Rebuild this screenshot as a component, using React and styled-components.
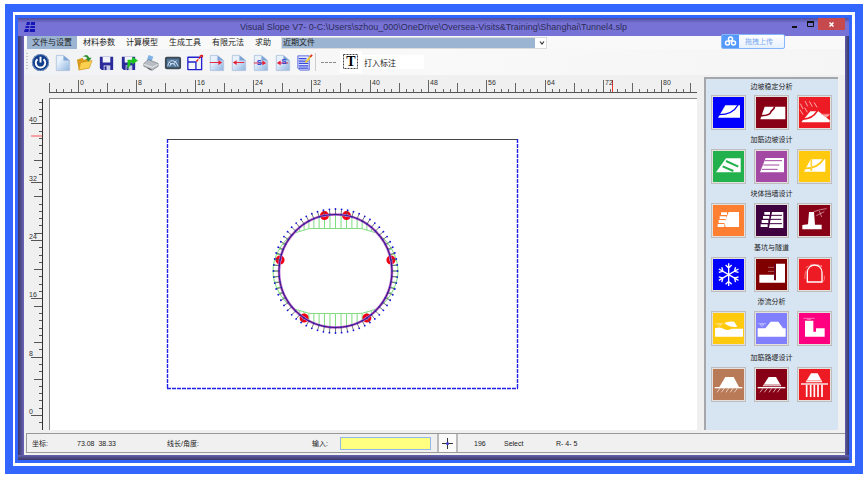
import styled, { createGlobalStyle } from 'styled-components'

const GlobalStyle = createGlobalStyle`
  * { box-sizing: border-box; }
  body {
    margin: 0;
    background: #fff;
    color: #222;
    font-family: "Liberation Sans", "Noto Sans CJK SC", sans-serif;
    font-size: 8px;
  }
  button, input, select { font: inherit; color: inherit; }
  svg { display: block; }`

const Page = styled.div`
  min-height: 100vh;
  display: flex;
  padding: 4px 4px 3px 5px;`

const OuterFrame = styled.div`
  flex: 1;
  display: flex;
  min-width: 0;
  border: 8px solid #36f;
  padding: 3px 3px 3px 2px;`

const InnerFrame = styled.div`
  flex: 1;
  display: flex;
  min-width: 0;
  border: 3px solid #36f;`

const Window = styled.div`
  flex: 1;
  min-width: 0;
  display: flex;
  flex-direction: column;
  background: linear-gradient(to right, #393766, #6b63b8 6px, #6b63b8 calc(100% - 5px), #393766);`

const TitleBar = styled.header`
  height: 18px;
  display: grid;
  grid-template-columns: 62px 1fr 62px;
  align-items: center;
  background: linear-gradient(#4f4c9c, #7773d6 5px);`

const AppIcon = styled.div`
  padding-left: 6px;`

const Title = styled.h1`
  margin: 0;
  text-align: center;
  font-weight: 400;
  font-size: 9px;
  line-height: 16px;
  color: #2d2b58;
  white-space: nowrap;`

const WindowButtons = styled.div`
  align-self: start;
  display: flex;
  justify-content: flex-end;
  padding-right: 4px;`

const WindowButton = styled.button`
  width: ${p => p.$close ? 27 : 16}px;
  height: 12px;
  padding: 0;
  border: 0;
  display: grid;
  place-items: center;
  background: ${p => p.$close ? '#c64a4d' : 'transparent'};`

const Client = styled.div`
  flex: 1;
  display: flex;
  flex-direction: column;
  margin: 0 4px 0 6px;
  background: #f0f0f0;
  padding-bottom: 2px;`

const FrameBottom = styled.div`
  height: 5px;
  background: linear-gradient(#6762ae, #393766);`

const MenuBar = styled.nav`
  height: 13px;
  display: flex;
  align-items: center;
  gap: 1px;
  padding-left: 3px;
  background: #f9f9f9;`

const MenuItem = styled.button`
  height: 13px;
  border: 0;
  padding: 0 5px;
  line-height: 12px;
  white-space: nowrap;
  background: ${p => p.$active ? '#9bb4d1' : 'transparent'};`

const Recent = styled.div`
  position: relative;
  width: 266px;
  margin-left: 4px;
  svg { position: absolute; right: 2px; top: 3px; pointer-events: none; }`

const RecentSelect = styled.select`
  display: block;
  appearance: none;
  width: 100%;
  height: 12px;
  padding: 0 1px;
  line-height: 10px;
  border: 1px solid #dcdcdc;
  border-radius: 0;
  background: linear-gradient(to left, #fff 11px, #9bb4d1 11px);`

const Toolbar = styled.div`
  height: 26px;
  display: flex;
  align-items: center;
  background: linear-gradient(to right, #f1f2f4, #f9f9f9 50%, #f5f5f5);`

const Grip = styled.div`
  width: 2px;
  height: 18px;
  margin: 0 1px 0 2px;
  background: repeating-linear-gradient(#c4c4c4 0 1px, transparent 1px 3px);`

const ToolButton = styled.button`
  width: 22px;
  height: 22px;
  padding: 0;
  border: 0;
  display: grid;
  place-items: center;
  background: ${p => p.$lit ? '#fff' : 'transparent'};`

const Divider = styled.div`
  width: 1px;
  height: 18px;
  margin-right: 2px;
  background: #ccc;`

const NoteInput = styled.input`
  width: 62px;
  height: 14px;
  border: 0;
  padding: 0 2px;
  background: #fff;`

const UploadButton = styled.button`
  position: absolute;
  top: 34px;
  right: 82px;
  height: 15px;
  width: 64px;
  padding: 0;
  display: flex;
  align-items: center;
  overflow: hidden;
  border: 1px solid #86b5f9;
  border-radius: 2px;
  background: linear-gradient(#fff, #e6f0fd);
  color: #79a9f2;
  font-size: 7px;
  line-height: 13px;
  svg { background: #559afb; }
  span { flex: 1; padding-left: 6px; text-align: left; }`

const Workspace = styled.main`
  flex: 1;
  display: grid;
  grid-template-columns: 25px 1fr 134px;
  grid-template-rows: 23px 1fr;
  padding-right: 7px;`

const TopRuler = styled.div`
  grid-column: 2;
  margin-right: 7px;
  svg { width: 100%; height: 23px; }`

const SideRuler = styled.div`
  grid-row: 2;
  display: flex;
  svg { width: 100%; height: auto; }`

const Canvas = styled.section`
  grid-column: 2;
  grid-row: 2;
  margin-right: 7px;
  display: flex;
  border-top: 1px solid #8a8a8a;
  border-left: 1px solid #8a8a8a;
  background: #fff;
  svg { width: 100%; min-height: 330px; height: auto; }`

const Panel = styled.aside`
  grid-column: 3;
  grid-row: 1 / 3;
  margin-top: 2px;
  padding-left: 5px;
  border-top: 2px solid #a5a7ab;
  border-left: 2px solid #a5a7ab;
  background: #d7e4f2;`

const Group = styled.section`
  width: 121px;
  & + & { padding-top: 2px; }
  & + & h2 { padding-bottom: 1px; }
  &:last-child { padding-top: 4px; }`

const GroupTitle = styled.h2`
  margin: 0;
  text-align: center;
  font-weight: 400;
  font-size: 7px;
  line-height: 16px;`

const GroupButtons = styled.div`
  display: flex;
  gap: 8px;`

const ModelButton = styled.button`
  width: 35px;
  height: 35px;
  padding: 1px;
  border: 1px solid #bdbdbd;
  color: ${p => p.$color};
  background: #e4e0de;
  svg { width: 31px; height: 31px; background: ${p => p.$color}; }`

const StatusBar = styled.footer`
  height: 20px;
  margin: 3px 0 0 2px;
  display: grid;
  grid-template-columns: 45px 90px 145px 28px 97px 37px 30px 52px 1fr;
  align-items: center;
  padding-left: 5px;
  border: 1px solid #999;
  border-right: 0;
  font-size: 7px;
  white-space: nowrap;`

const CommandInput = styled.input`
  width: 91px;
  height: 13px;
  padding: 0 2px;
  border: 1px solid #8fb8e6;
  border-radius: 0;
  background: #ffff80;`

const CrossButton = styled.button`
  width: 21px;
  height: 18px;
  padding: 0;
  border: 1px solid #bbb;
  border-width: 0 2px;
  display: grid;
  place-items: center;
  background: #fafafa;`

const UNIT = 7.29

function HorizontalRuler(){
  const ticks = []
  for (let n = -4; n <= 84; n++) ticks.push(n)
  return <TopRuler>
    <svg>
      {ticks.map(n => {
        const x = Math.round(29 + n * UNIT) + 0.5
        const size = n % 8 === 0 ? 12 : n % 4 === 0 ? 9 : 3
        return <line key={n} x1={x} x2={x} y1={17 - size} y2="17" stroke="#666" />
      })}
      <path d="M0 17.5H648" stroke="#555" />
      <path d="M563.5 5V17" stroke="#e33" />
      {ticks.filter(n => n >= 0 && n % 8 === 0).map(n =>
        <text key={n} x={Math.round(31 + n * UNIT)} y="10" fontSize="7" fill="#333">{n}</text>
      )}
    </svg>
  </TopRuler>
}

function VerticalRuler(){
  const ticks = []
  for (let n = -1; n <= 43; n++) ticks.push(n)
  return <SideRuler>
    <svg>
      {ticks.map(n => {
        const y = Math.round(317 - n * UNIT) + 0.5
        const start = n % 8 === 0 ? 7 : n % 5 === 0 ? 10 : 15
        return <line key={n} x1={start} x2="18" y1={y} y2={y} stroke="#555" />
      })}
      <path d="M18.5 1V332" stroke="#333" />
      <path d="M7 38H18" stroke="#f6a0a0" strokeWidth="2" />
      {ticks.filter(n => n >= 0 && n % 8 === 0).map(n =>
        <text key={n} x="5" y={Math.round(316 - n * UNIT)} fontSize="7" fill="#333">{n}</text>
      )}
    </svg>
  </SideRuler>
}

// the lining is split in 64 beam elements, moments are drawn in green
const RADIUS = 56.5
const NODES = Array.from({ length: 64 }, (_, i) => {
  const a = i * Math.PI / 32
  return { x: Math.sin(a), y: -Math.cos(a) }
})
const HINGES = [2, 62, 14, 50, 26, 38]

function momentPoint(n){
  const x = n.x * RADIUS
  const y = n.y * RADIUS
  const ax = Math.abs(x)
  if (Math.abs(n.y) > 0.67) {
    const flat = ax < 26 ? 42.5 : 42.5 - (ax - 26) * 0.3
    return { x, y: Math.sign(y) * Math.min(flat, Math.abs(y)) }
  }
  return { x: Math.sign(x) * (ax + 6 * (1 - Math.pow(Math.abs(n.y) / 0.7, 2))), y }
}

function Tunnel(){
  const points = list => list.map(p => `${p.x},${p.y}`).join(' ')
  const moments = NODES.map(momentPoint)
  return <g transform="translate(285.5 172)" fill="none">
    <g stroke="#7fdc7f">
      <polygon points={points(moments)} />
      {NODES.map((n, i) =>
        <line key={i} x1={n.x * RADIUS} y1={n.y * RADIUS} x2={moments[i].x} y2={moments[i].y} />
      )}
    </g>
    {HINGES.map(i =>
      <circle key={i} cx={NODES[i].x * RADIUS} cy={NODES[i].y * RADIUS} r="3" stroke="#f00012" strokeWidth="3" />
    )}
    <circle r={RADIUS} stroke="#b765cf" strokeWidth="2.6" />
    <circle r={RADIUS} stroke="#4a1a7c" strokeWidth="1.1" />
    {NODES.map((n, i) => <g key={i}>
      <line x1={n.x * RADIUS} y1={n.y * RADIUS} x2={n.x * 62} y2={n.y * 62} stroke="#555" strokeWidth="0.8" />
      <circle cx={n.x * 62} cy={n.y * 62} r="0.9" fill="#1414d8" />
      <circle cx={n.x * RADIUS} cy={n.y * RADIUS} r="0.7" fill="#1414d8" />
    </g>)}
  </g>
}

function Drawing(){
  return <Canvas>
    <svg>
      <path d="M117 40.5H468" stroke="#444" />
      <path d="M117.5 40V290M467.5 40V290M117 289.5H468" stroke="#2222e6" strokeWidth="1.4" strokeDasharray="4 1" />
      <Tunnel />
    </svg>
  </Canvas>
}

const Sheet = () => <>
  <linearGradient id="paper" x1="0" y1="0" x2="1" y2="1">
    <stop offset="0.3" stopColor="#e6f1fc" />
    <stop offset="1" stopColor="#8fb3e0" />
  </linearGradient>
  <path d="M3.5 2.5H11L17.5 8V18.5H3.5Z" fill="url(#paper)" stroke="#b4c6de" />
  <path d="M11 2.5V8H17.5Z" fill="#7fa3d4" />
</>

const Disk = () => <>
  <path d="M3 4H17V18H5L3 16Z" fill="#2a2a9a" />
  <path d="M6 4H14V10H6Z" fill="#f2f4fb" />
  <path d="M7 13H14V18H7Z" fill="#c9cde6" />
  <path d="M8 14H10V18H8Z" fill="#2a2a9a" />
</>

const TOOLS = [
  ['Power', <>
    <circle cx="10" cy="10" r="9" fill="#123f8c" />
    <circle cx="10" cy="10" r="8.5" fill="none" stroke="#7f9cc8" />
    <path d="M6.8 6.5A5 5 0 1 0 13.2 6.5M10 4V10" fill="none" stroke="#fff" strokeWidth="2" />
  </>],
  ['New', <Sheet />],
  ['Open', <>
    <path d="M2 7L8 5L9 7L14 6V16L4 18Z" fill="#d99b1e" />
    <path d="M6 10L18 8L15 16L4 18Z" fill="#fbd04e" stroke="#c88a1a" strokeWidth=".6" />
    <path d="M8 4Q13 0 15 5H17.5L14.5 9L11 6H13Q12 3 8 4Z" fill="#2d8f2d" />
  </>],
  ['Save', <Disk />],
  ['Save as', <>
    <Disk />
    <path d="M9 17V7H14V4L20 8L14 12V10H12V13Z" fill="#1ec41e" />
  </>],
  ['Print', <>
    <path d="M8 2L13 4L11 9L6 8Z" fill="#7fb2e6" />
    <path d="M3 11L8 7L18 11V14L12 18L3 14Z" fill="#b8bcc4" stroke="#70757f" strokeWidth=".7" />
    <path d="M3 12L12 15L18 12" fill="none" stroke="#eee" />
    <path d="M7 16L11 18" stroke="#444" />
  </>],
  ['Camera', <>
    <rect x="2" y="4" width="17" height="13" rx="2" fill="#3d4a55" />
    <rect x="4" y="6" width="13" height="9" fill="#52779c" />
    <path d="M5 14Q6 8 10 8T16 14M7 14Q8 10 10.5 11T13 14M6 9L9 12M14 8L11 12" fill="none" stroke="#d3e3f2" />
  </>],
  ['Resize', <>
    <path d="M3 4.5H17.5V18M3 18V4M3 17.5H18M3 9.5H11.5V18" fill="none" stroke="#2020d0" strokeWidth="1.4" />
    <path d="M12 9L18 2" stroke="#e01818" strokeWidth="1.4" strokeDasharray="3 1" />
    <path d="M15 2H19V5Z" fill="#e01818" />
  </>],
  ['Export', <><Sheet /><path d="M3 10H14" stroke="#e8203a" /><path d="M12 7.5L16 10L12 12.5Z" fill="#e8203a" /></>],
  ['Import', <><Sheet /><path d="M6 10H16" stroke="#e8203a" /><path d="M8 7.5L4 10L8 12.5Z" fill="#e8203a" /></>],
  ['Export section', <>
    <Sheet />
    <path d="M3 10.5H14" stroke="#e8203a" /><path d="M12 8L16 10.5L12 13Z" fill="#e8203a" />
    <text x="6" y="13" fontSize="8" fontWeight="700" fill="#2b3fd0">S</text>
  </>],
  ['Import section', <>
    <Sheet />
    <path d="M6 10.5H16" stroke="#e8203a" /><path d="M8 8L4 10.5L8 13Z" fill="#e8203a" />
    <text x="9" y="12" fontSize="8" fontWeight="700" fill="#2b3fd0">S</text>
  </>],
  ['Report', <>
    <path d="M3 3H15V18H5L3 16Z" fill="#dfe6ff" stroke="#3a49d8" strokeWidth=".8" />
    <path d="M4 6H12M4 8.5H14M4 11H14M4 13.5H14M4 16H14" stroke="#3a49d8" strokeWidth="1.3" />
    <path d="M11 10L17 3" stroke="#f2cf2c" strokeWidth="2" />
    <path d="M16 4L18 2" stroke="#e0382c" strokeWidth="2" />
  </>]
]

const Hatches = () => <path d="M27 64l-9 12M40 64l-9 12M53 64l-8 12M66 64l-8 12M79 64l-9 12" stroke="#fff" strokeWidth="2" />

// shapes that cut into the white soil body use currentColor, the button's own colour
const GROUPS = [
  { title: '边坡稳定分析', models: [
    ['#0000ff', <>
      <path d="M21 68L43 31H87V68Z" fill="#fff" />
      <path d="M20 59C50 60 70 50 81 30" stroke="currentColor" strokeWidth="4" />
    </>],
    ['#880015', <>
      <path d="M19 73L32 35H94V73Z" fill="#fff" />
      <path d="M18 62C38 62 48 60 50 52S60 46 62 34" stroke="currentColor" strokeWidth="5" />
    </>],
    ['#ed1c24', <>
      <path d="M14 80L40 49H64L98 76V82H14Z" fill="#fff" />
      <path d="M12 72C36 74 50 66 62 46" stroke="currentColor" strokeWidth="5" />
      <path d="M10 26l8 16M9 44l9 15M24 18l8 16M23 38l8 14M37 19l9 16M51 22l9 15" stroke="#f8a9a9" strokeWidth="3" />
      <path d="M72 58H99M80 60H96L88 67Z" fill="#f8a9a9" stroke="#f8a9a9" strokeWidth="2" />
    </>]
  ] },
  { title: '加筋边坡设计', models: [
    ['#22b14c', <>
      <path d="M15 70L45 28H89V70Z" fill="#fff" />
      <path d="M45 36L82 53M35 52L67 66" stroke="currentColor" strokeWidth="6" />
    </>],
    ['#a349a4', <>
      <path d="M18 70L35 27H90V70Z" fill="#fff" />
      <path d="M32 35H84M28 48H76M24 61H71" stroke="currentColor" strokeWidth="3" />
    </>],
    ['#ffc90e', <>
      <path d="M21 68L41 31H85V68Z" fill="#fff" />
      <path d="M20 58C46 60 68 48 80 30M43 31V65" stroke="currentColor" strokeWidth="5" />
      <path d="M43 34V60" stroke="#fff" strokeWidth="1" />
    </>]
  ] },
  { title: '块体挡墙设计', models: [
    ['#ff7f32', <>
      <path d="M53 27H84V72H44L40 60Z" fill="#fff" />
      <path d="M30 28H48V36H30ZM26 40H46V48H26ZM23 51H43V60H23ZM20 63H40V72H20Z" fill="#fff" />
    </>],
    ['#3f0040', <>
      <path d="M31 27H48V35H31ZM27 39H46V47H27ZM23 51H43V60H23ZM20 64H41V72H20Z" fill="#fff" />
      <path d="M54 27H88V75H45Z" fill="#fff" />
      <path d="M50 37H84M46 49H82M42 62H84" stroke="currentColor" strokeWidth="3" />
    </>],
    ['#880015', <>
      <path d="M16 79V66L33 64L36 27H51L54 65H74V79Z" fill="#fff" />
      <path d="M50 26L70 20L89 17M58 38L82 26M67 24L74 42" stroke="#e6bcc2" strokeWidth="2" />
    </>]
  ] },
  { title: '基坑与隧道', models: [
    ['#0000ff', <g stroke="#fff" strokeWidth="4">
      {[0, 60, 120, 180, 240, 300].map(a =>
        <path key={a} transform={`rotate(${a} 53 53)`} d="M53 53V19M44 24L53 33L62 24" />
      )}
    </g>],
    ['#800000', <>
      <path d="M16 53H60V70H66V20H93V77H16Z" fill="#fff" />
      <path d="M42 31H60M42 43H60" stroke="#c98a94" strokeWidth="2" />
      <path d="M62 20V68" stroke="#5c0030" strokeWidth="3" />
    </>],
    ['#ed1c24', <>
      <path d="M31 75V46A22 22 0 0 1 75 46V75Z" stroke="#fff" strokeWidth="4" />
      <path d="M24 66V52L28 40M26 32L34 27M44 20L36 30M62 22L74 29M74 24L70 34M82 56V68L78 74" stroke="#f8a9a9" strokeWidth="2" />
    </>]
  ] },
  { title: '渗流分析', models: [
    ['#ffc90e', <>
      <path d="M12 52Q28 46 40 55Q50 60 62 53H96V77H12Z" fill="#fff" />
      <path d="M40 36Q50 30 70 32L79 47Q58 52 40 36Z" fill="#fff" />
      <path d="M13 38H38M20 40H32L26 46Z" stroke="#ffe9a0" strokeWidth="2" />
    </>],
    ['#8080ff', <>
      <path d="M11 52H34L50 32H73L87 52H95V77H11Z" fill="#fff" />
      <path d="M12 38H36M18 40H30L24 47Z" stroke="#d0d0ff" strokeWidth="2" />
    </>],
    ['#ff0080', <>
      <path d="M24 29H49V62H57V52H83V77H24Z" fill="#fff" />
      <path d="M19 22H53M30 25H42" stroke="#ffb0d8" strokeWidth="2" />
    </>]
  ] },
  { title: '加筋路堤设计', models: [
    ['#b97a57', <>
      <path d="M25 60L43 30H68L84 60Z" fill="#fff" />
      <path d="M11 62H94" stroke="#fff" strokeWidth="4" />
      <Hatches />
    </>],
    ['#880015', <>
      <path d="M26 58L44 30H66L82 58Z" fill="#fff" />
      <path d="M30 54H78" stroke="#c98a94" strokeWidth="4" />
      <path d="M11 62H94" stroke="#fff" strokeWidth="4" />
      <Hatches />
    </>],
    ['#ed1c24', <>
      <path d="M26 46L42 19H62L76 46Z" fill="#fff" />
      <path d="M28 41H74" stroke="#f8a9a9" strokeWidth="4" />
      <path d="M12 51H93" stroke="#fff" strokeWidth="4" />
      <path d="M29 53V90M41 53V90M52 53V90M63 53V90M75 53V90" stroke="#fff" strokeWidth="5" />
    </>]
  ] }
]

const MENUS = ['文件与设置', '材料参数', '计算模型', '生成工具', '有限元法', '求助']

export default function App(){
  return <Page>
    <GlobalStyle />
    <OuterFrame>
      <InnerFrame>
        <Window>
          <TitleBar>
            <AppIcon>
              <svg width="12" height="12" viewBox="0 0 12 12">
                <path d="M3 1H11V11H0Z" fill="#1616b8" />
                <path d="M2 4.5H11M1 7.5H11M6.5 1L5 11" stroke="#7773d6" />
              </svg>
            </AppIcon>
            <Title>Visual Slope V7- 0-C:\Users\szhou_000\OneDrive\Oversea-Visits&amp;Training\Shanghai\Tunnel4.slp</Title>
            <WindowButtons>
              <WindowButton aria-label="Minimize">
                <svg width="6" height="8"><path d="M0 7H5" stroke="#111" strokeWidth="2" /></svg>
              </WindowButton>
              <WindowButton aria-label="Maximize">
                <svg width="7" height="6"><path d="M.5 1H6.5V5.5H.5Z" fill="none" stroke="#111" /><path d="M0 1H7" stroke="#111" strokeWidth="2" /></svg>
              </WindowButton>
              <WindowButton $close aria-label="Close">
                <svg width="5" height="5"><path d="M.5 .5L4.5 4.5M4.5 .5L.5 4.5" stroke="#fff" strokeWidth="1.5" /></svg>
              </WindowButton>
            </WindowButtons>
          </TitleBar>
          <Client>
            <MenuBar>
              {MENUS.map((name, i) => <MenuItem key={name} $active={i === 0}>{name}</MenuItem>)}
              <Recent>
                <RecentSelect aria-label="近期文件"><option>近期文件</option></RecentSelect>
                <svg width="6" height="6"><path d="M1 1.5L3 4L5 1.5" fill="none" stroke="#333" strokeWidth="1.2" /></svg>
              </Recent>
            </MenuBar>
            <Toolbar>
              <Grip />
              {TOOLS.map(([name, icon]) => <ToolButton key={name} aria-label={name}>
                <svg width="19" height="19" viewBox="0 0 20 20">{icon}</svg>
              </ToolButton>)}
              <Divider />
              <ToolButton aria-label="Line">
                <svg width="16" height="4"><path d="M0 2.5H16" stroke="#888" strokeDasharray="3 1" /></svg>
              </ToolButton>
              <ToolButton $lit aria-label="Text">
                <svg width="16" height="16">
                  <rect x=".5" y=".5" width="14" height="14" fill="none" stroke="#444" strokeDasharray="2 1" />
                  <text x="8" y="12" textAnchor="middle" fontFamily="Liberation Serif, serif" fontWeight="700" fontSize="14">T</text>
                </svg>
              </ToolButton>
              <NoteInput aria-label="打入标注" defaultValue="打入标注" />
            </Toolbar>
            <Workspace>
              <HorizontalRuler />
              <VerticalRuler />
              <Drawing />
              <Panel>
                {GROUPS.map(group => <Group key={group.title}>
                  <GroupTitle>{group.title}</GroupTitle>
                  <GroupButtons>
                    {group.models.map(([color, shape], n) =>
                      <ModelButton key={n} $color={color} aria-label={`${group.title} ${n + 1}`}>
                        <svg viewBox="6 6 93 93" fill="none">{shape}</svg>
                      </ModelButton>
                    )}
                  </GroupButtons>
                </Group>)}
              </Panel>
            </Workspace>
            <StatusBar>
              <span>坐标:</span>
              <span>73.08&nbsp; 38.33</span>
              <span>线长/角度:</span>
              <label htmlFor="command">输入:</label>
              <CommandInput id="command" />
              <CrossButton aria-label="Pick">
                <svg width="13" height="13">
                  <path d="M6.5 1V12M1 6.5H12" stroke="#333" />
                  <circle cx="6.5" cy="6.5" r="1.5" fill="#3b3bd0" />
                </svg>
              </CrossButton>
              <span>196</span>
              <span>Select</span>
              <span>R- 4- 5</span>
            </StatusBar>
          </Client>
          <FrameBottom />
        </Window>
      </InnerFrame>
    </OuterFrame>
    <UploadButton>
      <svg width="17" height="13" viewBox="0 0 17 13" fill="none" stroke="#fff" strokeWidth="1.5">
        <circle cx="8.5" cy="4" r="2" />
        <circle cx="5.5" cy="8" r="2" />
        <circle cx="11.5" cy="8" r="2" />
      </svg>
      <span>拖拽上传</span>
    </UploadButton>
  </Page>
}
